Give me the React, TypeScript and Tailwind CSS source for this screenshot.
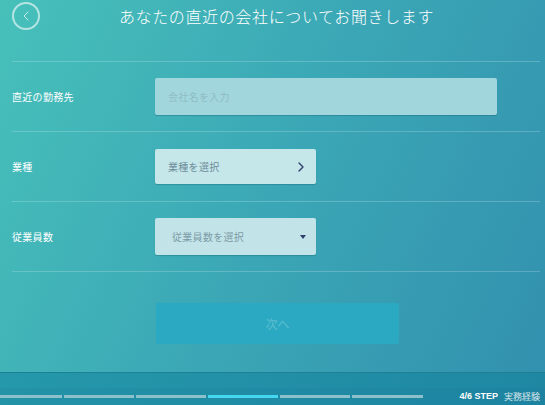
import { ChevronLeft, ChevronRight } from "lucide-react";

const font = { fontFamily: '"Noto Sans CJK JP", "Noto Sans", sans-serif' };

const segments = [
  { w: "w-[62px]", active: false },
  { w: "w-[70px]", active: false },
  { w: "w-[70px]", active: false },
  { w: "w-[70px]", active: true },
  { w: "w-[70px]", active: false },
  { w: "w-[71px]", active: false },
];

function Row({ label, children }: { label: string; children: React.ReactNode }) {
  return (
    <div className="flex h-[70px] items-center border-t border-white/20">
      <div className="w-[143px] text-[10px] tracking-[0.03em] text-white">{label}</div>
      {children}
    </div>
  );
}

export default function App() {
  return (
    <div
      className="flex h-[405px] w-full flex-col overflow-hidden bg-[linear-gradient(115deg,#47c0ba_0%,#3ba7b6_50%,#3290ae_100%)]"
      style={font}
    >
      {/* Header */}
      <div className="relative flex h-[61px] items-start justify-center">
        <button className="absolute left-3 top-[2px] flex h-[28px] w-[28px] items-center justify-center rounded-full border-2 border-white/60 text-white/70">
          <ChevronLeft size={16} strokeWidth={1.5} />
        </button>
        <h1 className="ml-[8px] mt-[4px] text-[16px] font-light tracking-[0.04em] text-white">
          あなたの直近の会社についてお聞きします
        </h1>
      </div>

      {/* Form */}
      <div className="ml-3 mr-[5px]">
        <Row label="直近の勤務先">
          <div className="flex h-[37px] w-[342px] items-center rounded-[2px] bg-[#a2d6dd] pl-[13px] text-[10px] tracking-[0.03em] text-[#8fbcc4] shadow-[0_1px_1px_rgba(0,60,80,0.25)]">
            会社名を入力
          </div>
        </Row>
        <Row label="業種">
          <div className="flex h-[35px] w-[161px] items-center justify-between rounded-[2px] bg-[#c6e7ea] pl-[13px] pr-[7px] text-[10px] tracking-[0.03em] text-[#6d8c9a] shadow-[0_1px_1px_rgba(0,60,80,0.25)]">
            業種を選択
            <ChevronRight size={16} strokeWidth={2} className="text-[#2e3f6e]" />
          </div>
        </Row>
        <Row label="従業員数">
          <div className="flex h-[37px] w-[161px] items-center justify-between rounded-[2px] bg-[#c2e4e9] pl-[17px] pr-[10px] text-[10px] tracking-[0.03em] text-[#7d9ba6] shadow-[0_1px_1px_rgba(0,60,80,0.25)]">
            従業員数を選択
            <span className="h-0 w-0 border-x-[3.5px] border-t-[4px] border-x-transparent border-t-[#2e3f6e]" />
          </div>
        </Row>
        <div className="border-t border-white/20" />
      </div>

      {/* Next button */}
      <div className="mt-[31px] pl-[156px]">
        <button className="flex h-[41px] w-[243px] items-center justify-center rounded-[2px] bg-[#2ca9c2] text-[12px] text-[#5cbfd0]">
          次へ
        </button>
      </div>

      {/* Footer */}
      <div className="mt-auto h-[33px] border-t border-[#1f7f94] bg-[linear-gradient(90deg,#2598ab,#1f87a2)]">
        <div className="mt-[15px] flex h-[17px] items-center bg-[linear-gradient(90deg,#2393a8,#1d83a0)]">
          <div className="flex gap-[2px]">
            {segments.map((s, i) => (
              <div
                key={i}
                className={`${s.w} h-[3px] ${s.active ? "bg-[#45d6f0]" : "bg-[#8cc1cc]"}`}
              />
            ))}
          </div>
          <div className="ml-auto mr-[5px] flex items-center gap-[6px]">
            <span
              className="text-[9px] font-bold text-white"
              style={{ fontFamily: '"Liberation Sans", sans-serif' }}
            >
              4/6 STEP
            </span>
            <span className="text-[9px] text-white/80">実務経験</span>
          </div>
        </div>
      </div>
    </div>
  );
}
